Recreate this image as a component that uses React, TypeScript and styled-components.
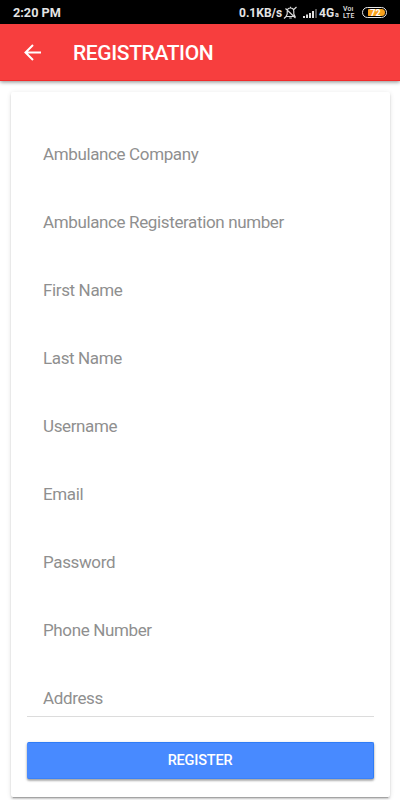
import React from "react";
import styled, { createGlobalStyle } from "styled-components";

const GlobalStyle = createGlobalStyle`
  * { box-sizing: border-box; }
  body { margin: 0; background: #fff; font-family: Roboto, sans-serif; }
`;

const Screen = styled.main`
  width: 400px;
  height: 800px;
  display: flex;
  flex-direction: column;
  background: #fff;
  overflow: hidden;
`;

const StatusBar = styled.div`
  height: 24px;
  flex: none;
  display: flex;
  align-items: center;
  padding: 2px 13px 0;
  background: #000;
  color: #e4e4e4;
  font-size: 12px;
  line-height: 22px;
  font-weight: 700;
  white-space: nowrap;
`;

const Clock = styled.span`
  flex: 1;
  font-size: 12.7px;
`;

const StatusText = styled.span<{ $width: number }>`
  width: ${(p) => p.$width}px;
  flex: none;
`;

const NetworkType = styled.span`
  display: flex;
  align-items: baseline;
  flex: none;
  width: 21px;
  margin-left: 1px;
`;

const StatusIcon = styled.svg<{ $left?: number }>`
  display: block;
  flex: none;
  margin-left: ${(p) => p.$left ?? 0}px;
`;

const NetworkSuffix = styled.small`
  font-size: 7px;
  line-height: 8px;
  margin-left: 1px;
`;

const Volte = styled.span`
  display: grid;
  flex: none;
  width: 14px;
  margin: -1px 0 0 3px;
  font-size: 6.8px;
  font-weight: 500;
  line-height: 7px;
  letter-spacing: 0.2px;
`;

const Battery = styled.span`
  flex: none;
  width: 25px;
  height: 11px;
  margin: -1px 0 0 5px;
  padding: 1px;
  display: flex;
  justify-content: flex-end;
  border: 1px solid #e6e6e6;
  border-radius: 6px;
`;

const BatteryLevel = styled.span`
  width: 17px;
  height: 7px;
  padding-right: 2px;
  border-radius: 1px 4px 4px 1px;
  background: #f9a11b;
  color: #fff;
  font-size: 9px;
  line-height: 8px;
  text-align: center;
`;

const Toolbar = styled.header`
  height: 57px;
  flex: none;
  display: flex;
  align-items: center;
  padding: 0 22px;
  background: #f73e3e;
  border-bottom: 1px solid #f22c2c;
  box-shadow: 0 1px 4px rgba(0, 0, 0, 0.48);
  color: #fff;
`;

const BackButton = styled.button`
  width: 22px;
  height: 22px;
  margin: 0 29px 0 0;
  padding: 0;
  border: 0;
  background: none;
  color: inherit;
`;

const Title = styled.h1`
  margin: 1px 0 0;
  font-size: 21px;
  line-height: 24px;
  font-weight: 500;
  letter-spacing: -0.38px;
`;

const Card = styled.form`
  flex: none;
  width: 379.5px;
  height: 705px;
  margin: 11px 0 0 10.5px;
  padding: 28px 16px 0 16.5px;
  display: flex;
  flex-direction: column;
  background: #fff;
  border-radius: 2px;
  box-shadow: 0 2px 2px 0 rgba(0, 0, 0, 0.14),
    0 3px 1px -2px rgba(0, 0, 0, 0.2), 0 1px 5px 0 rgba(0, 0, 0, 0.12);
`;

const Fields = styled.div`
  display: grid;
  grid-auto-rows: 68.1px;
  height: 597px;
  border-bottom: 1px solid #dcdcdc;
`;

const Field = styled.label`
  display: flex;
  align-items: center;
  padding: 0 16px 1px;
  color: #8f8f8f;
  font-size: 17px;
  line-height: 20px;
  letter-spacing: -0.37px;
`;

const RegisterButton = styled.button`
  height: 37px;
  margin: 25px 0 0;
  padding: 1px 1px 0 0;
  border: 1px solid #2f7cf6;
  border-left-color: #488aff;
  border-bottom-color: #3a82fa;
  border-radius: 2px;
  background: #488aff;
  color: #fff;
  box-shadow: 0 2px 2px rgba(0, 0, 0, 0.2), 0 1px 3px rgba(0, 0, 0, 0.26);
  font: 500 14.5px/20px Roboto, sans-serif;
  letter-spacing: -0.2px;
`;

const fields = [
  "Ambulance Company",
  "Ambulance Registeration number",
  "First Name",
  "Last Name",
  "Username",
  "Email",
  "Password",
  "Phone Number",
  "Address",
];

export default function App() {
  return (
    <>
      <GlobalStyle />
      <Screen>
        <StatusBar>
          <Clock>2:20 PM</Clock>
          <StatusText $width={44}>0.1KB/s</StatusText>
          <StatusIcon width="15" height="14" viewBox="0 0 15 14" fill="none" stroke="#ddd" strokeWidth="1.15">
            <path d="M3 10.5h9L10.8 8V5.5c0-2-1.3-3.5-3.3-3.5S4.2 3.5 4.2 5.5V8L3 10.5ZM7.5 2V.8M6.2 12h2.6M1 12.5l3-2.7M10.5 3.7 13.5 1M2.5 2.5l10 9.5" />
          </StatusIcon>
          <StatusIcon $left={5} width="15" height="11" viewBox="0 0 15 11" fill="#ddd">
            <path d="M0 8h2v2H0zM3 6.5h2V10H3zM6 5h2v5H6zM9 3h2v7H9z" />
            <path fill="#555" d="M12 1h2v9h-2z" />
          </StatusIcon>
          <NetworkType>
            4G<NetworkSuffix>a</NetworkSuffix>
          </NetworkType>
          <Volte>
            <span>Voı</span>
            <span>LTE</span>
          </Volte>
          <Battery>
            <BatteryLevel>72</BatteryLevel>
          </Battery>
        </StatusBar>
        <Toolbar>
          <BackButton type="button" aria-label="Back">
            <svg width="22" height="22" viewBox="0 0 22 22" fill="none" stroke="currentColor" strokeWidth="2">
              <path d="M19 11.5H4M11 4l-7.5 7.5L11 19" />
            </svg>
          </BackButton>
          <Title>REGISTRATION</Title>
        </Toolbar>
        <Card>
          <Fields>
            {fields.map((name) => (
              <Field key={name}>{name}</Field>
            ))}
          </Fields>
          <RegisterButton type="button">REGISTER</RegisterButton>
        </Card>
      </Screen>
    </>
  );
}
